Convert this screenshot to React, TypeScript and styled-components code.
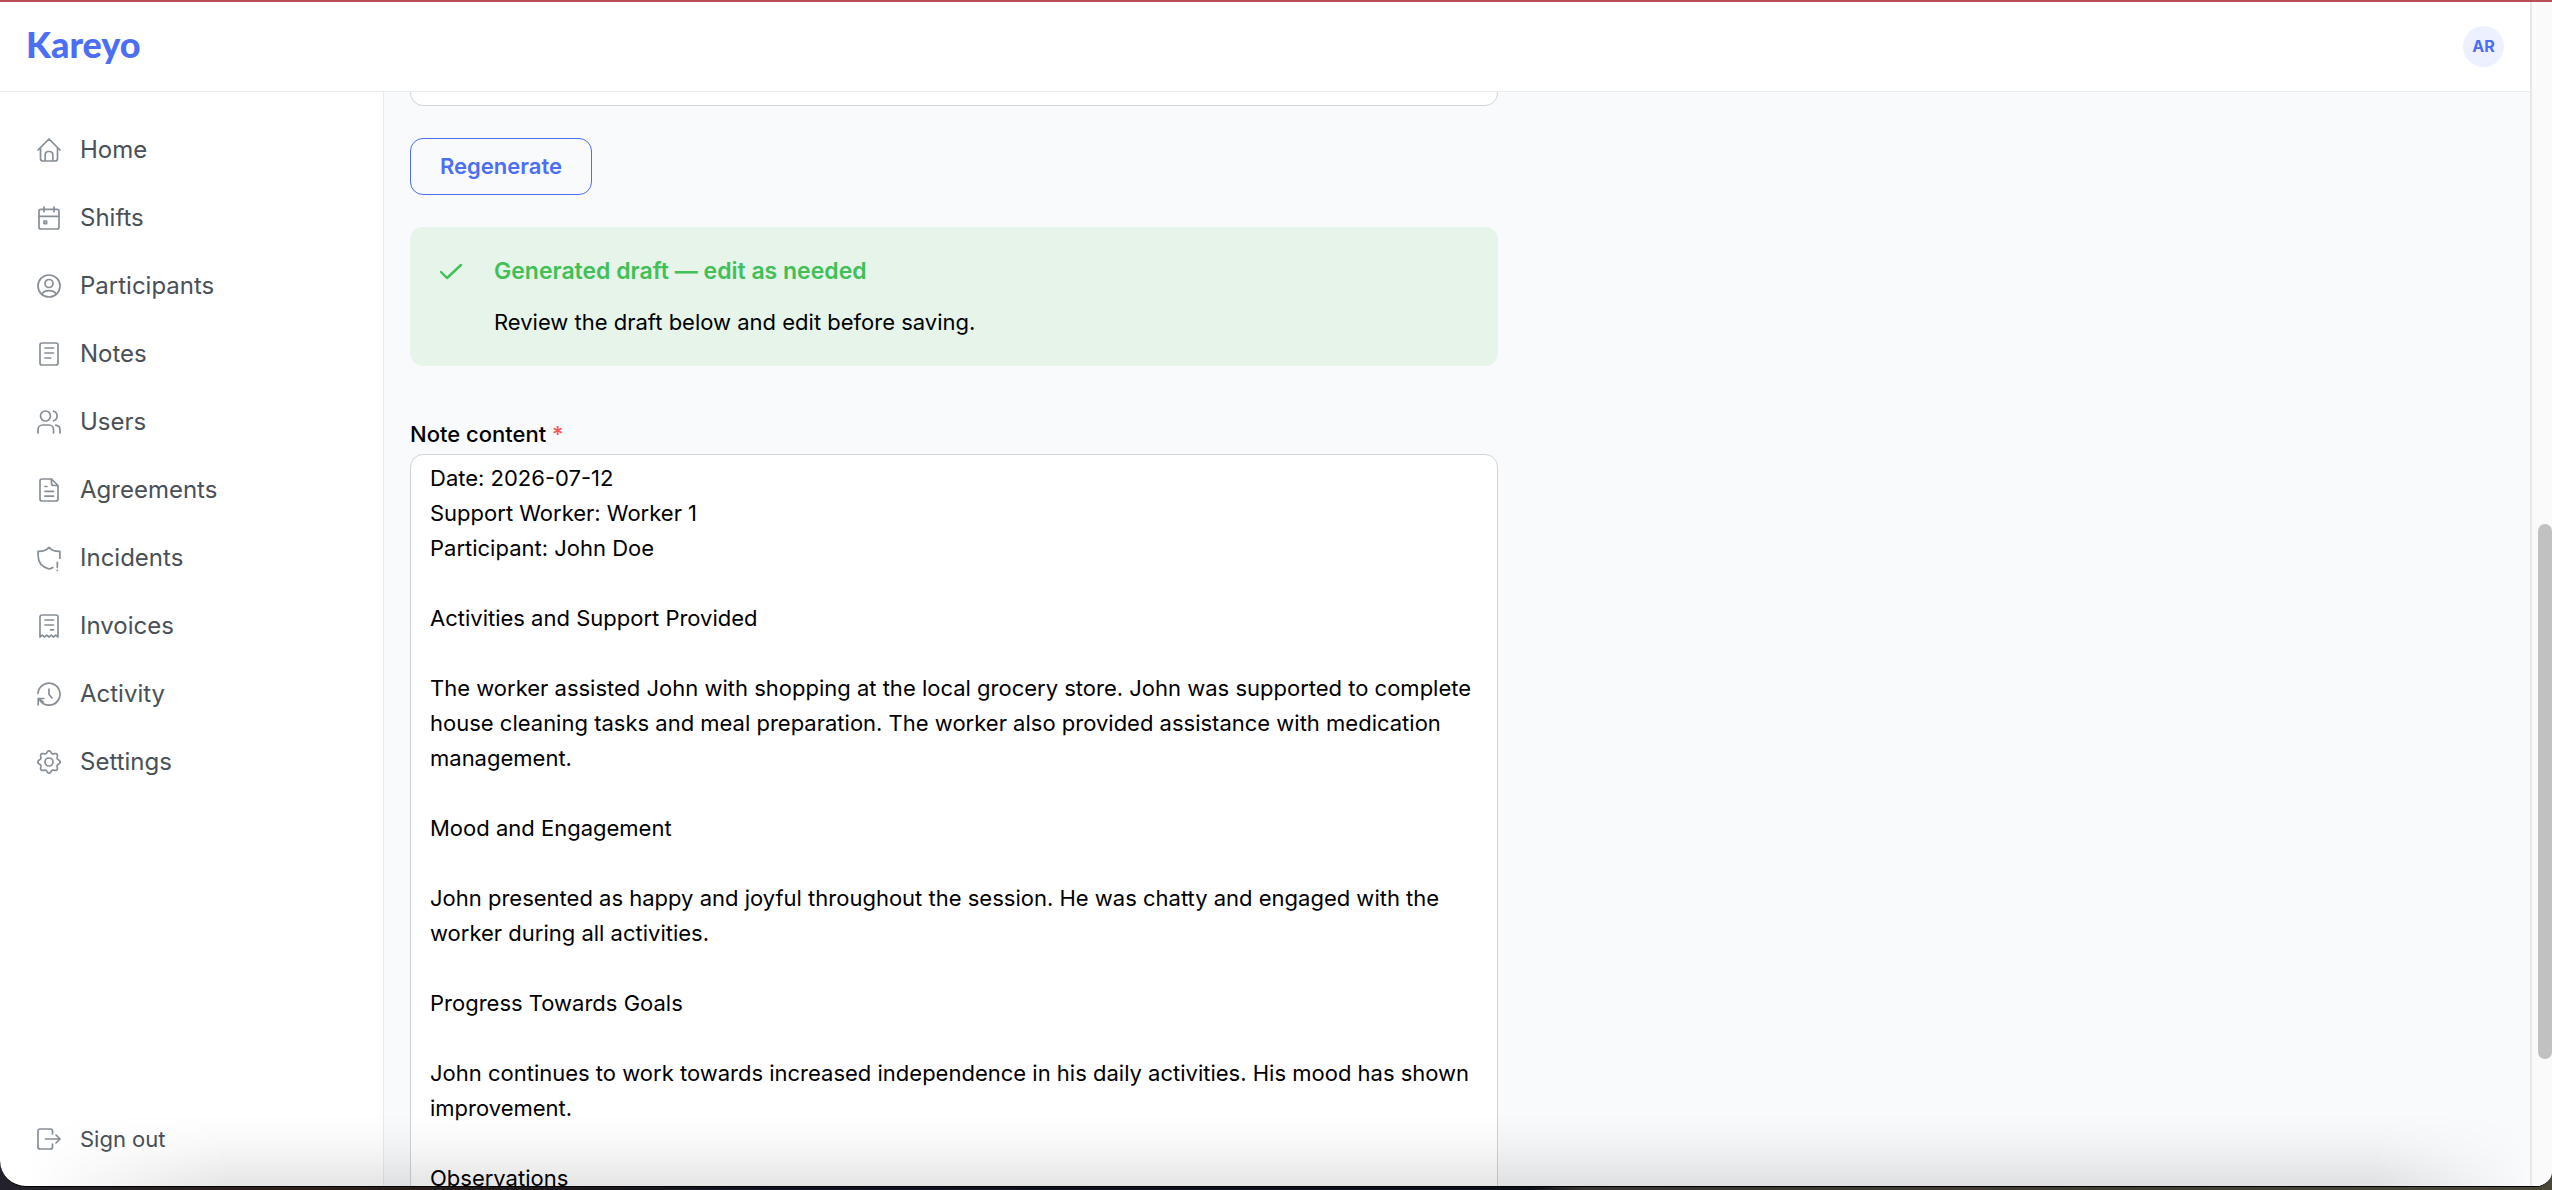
import React from 'react';
import styled, { createGlobalStyle } from 'styled-components';

const Global = createGlobalStyle`
  *, *::before, *::after { box-sizing: border-box; }
  html, body { margin: 0; height: 100%; overflow: hidden; }
  body {
    background: #2b231d;
    color: #000;
    font-family: Inter, "Liberation Sans", sans-serif;
    font-size: 22px;
  }
  #root { height: 100%; }
`;

const Desktop = styled.div`
  height: 100vh;
  padding-bottom: 3px;
  background: linear-gradient(90deg, #23222c 0%, #2e2119 12%, #10131f 30%, #0b0f18 60%, #3a3431 62%, #4a4638 100%);
`;

const Window = styled.div`
  position: relative;
  display: flex;
  height: 100%;
  overflow: hidden;
  background: #fff;
  border-top: 2px solid #b94f54;
  border-bottom: 1px solid #000;
  border-radius: 0 0 16px 26px;
`;

const Shade = styled.div`
  position: absolute;
  inset: auto 0 0 0;
  height: 72px;
  pointer-events: none;
  background: linear-gradient(180deg, rgba(0, 0, 0, 0), rgba(0, 0, 0, 0.03) 45%, rgba(0, 0, 0, 0.1));
  mask-image: linear-gradient(90deg, transparent 1%, #000 9%, #000 93%, transparent 99%);
`;

const Page = styled.div`
  flex: 1;
  min-width: 0;
  display: flex;
  flex-direction: column;
`;

const Header = styled.header`
  flex: none;
  display: flex;
  align-items: center;
  justify-content: space-between;
  height: 90px;
  padding: 0 26px;
  border-bottom: 1px solid #e9ecef;
`;

const Logo = styled.a`
  padding-bottom: 6px;
  color: #4c6ef5;
  font-family: Lato, Inter, sans-serif;
  font-size: 36px;
  font-weight: 900;
  line-height: 44px;
  text-decoration: none;
`;

const Avatar = styled.button`
  width: 41px;
  height: 41px;
  padding: 0;
  border: 0;
  border-radius: 50%;
  background: #edf0fe;
  color: #4c6ef5;
  font: 700 16px/41px Inter, sans-serif;
`;

const Body = styled.div`
  flex: 1;
  min-height: 0;
  display: flex;
`;

const Sidebar = styled.aside`
  flex: none;
  display: flex;
  flex-direction: column;
  justify-content: space-between;
  width: 384px;
  padding: 24px 0 13px;
  border-right: 1px solid #e9ecef;
`;

const Nav = styled.nav`
  display: flex;
  flex-direction: column;
`;

const NavLink = styled.a`
  display: flex;
  align-items: center;
  gap: 19px;
  height: 68px;
  padding: 0 37px;
  color: #495057;
  font-size: 24px;
  line-height: 36px;
  text-decoration: none;
`;

const SignOut = styled.button`
  display: flex;
  align-items: center;
  gap: 19px;
  height: 68px;
  padding: 0 37px;
  border: 0;
  background: none;
  color: #495057;
  font: 400 22px/36px Inter, sans-serif;
`;

const Icon = styled.svg`
  flex: none;
  width: 24px;
  height: 24px;
  overflow: visible;
  fill: none;
  stroke: #868e96;
  stroke-width: 1.7;
  stroke-linecap: round;
  stroke-linejoin: round;
`;

const Main = styled.main`
  flex: 1;
  min-width: 0;
  overflow: hidden;
  padding: 0 26px;
  background: #f8fafc;
`;

const Form = styled.form`
  display: flex;
  flex-direction: column;
  align-items: flex-start;
  width: 100%;
  max-width: 1088px;
`;

const Prompt = styled.textarea`
  display: block;
  width: 100%;
  height: 120px;
  margin-top: -106px;
  border: 1px solid #ced4da;
  border-radius: 13px;
  background: #fff;
  resize: none;
`;

const Regenerate = styled.button`
  height: 57px;
  margin: 32px 0;
  padding: 0 29px 2px;
  border: 1px solid #4c6ef5;
  border-radius: 13px;
  background: transparent;
  color: #4c6ef5;
  font: 600 22px/34px Inter, sans-serif;
`;

const Alert = styled.section`
  display: flex;
  gap: 30px;
  width: 100%;
  padding: 26px 28px;
  border-radius: 13px;
  background: #e6f4ea;
`;

const Check = styled.svg`
  flex: none;
  width: 26px;
  height: 36px;
  fill: none;
  stroke: #40c057;
  stroke-width: 2.4;
  stroke-linecap: round;
  stroke-linejoin: round;
`;

const AlertText = styled.div`
  display: flex;
  flex-direction: column;
  gap: 16px;
`;

const AlertTitle = styled.h2`
  margin: 0;
  color: #40c057;
  font-size: 23px;
  font-weight: 600;
  line-height: 36px;
`;

const AlertBody = styled.p`
  margin: 0;
  line-height: 35px;
`;

const Label = styled.label`
  margin: 51px 0 2px;
  font-weight: 500;
  line-height: 35px;
`;

const Star = styled.span`
  color: #fa5252;
`;

const Note = styled.textarea`
  display: block;
  width: 100%;
  height: 900px;
  padding: 6px 19px;
  border: 1px solid #ced4da;
  border-radius: 13px;
  background: #fff;
  color: #000;
  font: 400 22px/35px Inter, sans-serif;
  resize: none;
  overflow: hidden;
`;

const Track = styled.div`
  flex: none;
  display: flex;
  justify-content: flex-end;
  align-items: flex-start;
  width: 22px;
  padding-top: 522px;
  border-left: 2px solid #e6e7e8;
  background: #fafafa;
`;

const Thumb = styled.div`
  width: 14px;
  height: 535px;
  border-radius: 8px;
  background: #c1c1c1;
`;

const gearPath = Array.from({ length: 96 }, (_, i) => {
  const a = (i / 96) * Math.PI * 2;
  const r = 10 + 1.2 * Math.cos(8 * a);
  return `${i ? 'L' : 'M'}${(12 + r * Math.cos(a)).toFixed(2)} ${(12 + r * Math.sin(a)).toFixed(2)}`;
}).join('') + 'Z';

const items: { label: string; icon: React.ReactNode }[] = [
  {
    label: 'Home',
    icon: <path d="M1 12 12 1l11 11M3.5 9.8v10.7a2.5 2.5 0 0 0 2.5 2.5h12a2.5 2.5 0 0 0 2.5-2.5V9.8M8.2 23v-6.5a3 3 0 0 1 3-3h1.6a3 3 0 0 1 3 3V23" />,
  },
  {
    label: 'Shifts',
    icon: (
      <>
        <rect x="2" y="3.3" width="20" height="19.7" rx="2" />
        <path d="M2 10.3h20M7 1v4.7M17 1v4.7" />
        <rect x="7" y="15" width="2.6" height="2.6" />
      </>
    ),
  },
  {
    label: 'Participants',
    icon: (
      <>
        <circle cx="12" cy="12" r="11" />
        <circle cx="12" cy="9.5" r="4" />
        <path d="M5 20.3c1.2-2.8 3.8-3.6 7-3.6s5.8.8 7 3.6" />
      </>
    ),
  },
  {
    label: 'Notes',
    icon: (
      <>
        <rect x="3" y="1" width="18" height="22" rx="2" />
        <path d="M8 6h8.5M8 11h8.5M8 16h5.7" />
      </>
    ),
  },
  {
    label: 'Users',
    icon: (
      <>
        <circle cx="8.5" cy="6" r="5" />
        <path d="M1 23v-3.5a4.5 4.5 0 0 1 4.5-4.5h6.5a4.5 4.5 0 0 1 4.5 4.5V23M16.5 1.2a5 5 0 0 1 0 9.6M18.8 15.2a5 5 0 0 1 4.2 5V23" />
      </>
    ),
  },
  {
    label: 'Agreements',
    icon: <path d="M14.5 1H5a2 2 0 0 0-2 2v18a2 2 0 0 0 2 2h14a2 2 0 0 0 2-2V7.5L14.5 1v4.5a2 2 0 0 0 2 2H21M8 8.5h2M8 13.3h8.5M8 18.2h8.5" />,
  },
  {
    label: 'Incidents',
    icon: <path d="M22.9 12.2V5.4C18.5 5.6 15 4.5 12 1.3 9 4.5 5.5 5.6 1.1 5.4V9.5c0 6.5 4 11.5 10.9 13.5 1.5-.3 2.8-.8 3.8-1.5M20.3 16.3v5M20.3 24.3v.1" />,
  },
  {
    label: 'Invoices',
    icon: <path d="M3 23V3a2 2 0 0 1 2-2h14a2 2 0 0 1 2 2v20l-2.2-1.8L16.5 23l-2.2-1.8L12 23l-2.2-1.8L7.5 23l-2.3-1.8L3 23M8 6h8.5M8 11h8.5M13.5 15.8h3" />,
  },
  {
    label: 'Activity',
    icon: <path d="M1 11.5A11 11 0 1 1 3 18.5M1.2 22.8v-6.3h5.6M1.2 16.5l5 3.5M12 7v5.5l3 3.5" />,
  },
  {
    label: 'Settings',
    icon: (
      <>
        <path d={gearPath} />
        <circle cx="12" cy="12" r="4" />
      </>
    ),
  },
];

const noteText = `Date: 2026-07-12
Support Worker: Worker 1
Participant: John Doe

Activities and Support Provided

The worker assisted John with shopping at the local grocery store. John was supported to complete house cleaning tasks and meal preparation. The worker also provided assistance with medication management.

Mood and Engagement

John presented as happy and joyful throughout the session. He was chatty and engaged with the worker during all activities.

Progress Towards Goals

John continues to work towards increased independence in his daily activities. His mood has shown improvement.

Observations`;

export default function App() {
  return (
    <Desktop>
      <Global />
      <Window>
        <Page>
          <Header>
            <Logo href="#">Kareyo</Logo>
            <Avatar type="button">AR</Avatar>
          </Header>
          <Body>
            <Sidebar>
              <Nav>
                {items.map((item) => (
                  <NavLink href="#" key={item.label}>
                    <Icon viewBox="0 0 24 24" aria-hidden="true">{item.icon}</Icon>
                    {item.label}
                  </NavLink>
                ))}
              </Nav>
              <SignOut type="button">
                <Icon viewBox="0 0 24 24" aria-hidden="true">
                  <path d="M15.5 7V4a2 2 0 0 0-2-2H3a2 2 0 0 0-2 2v16a2 2 0 0 0 2 2h10.5a2 2 0 0 0 2-2v-3M8.5 12H23M19 8l4 4-4 4" />
                </Icon>
                Sign out
              </SignOut>
            </Sidebar>
            <Main>
              <Form>
                <Prompt aria-label="Prompt" />
                <Regenerate type="button">Regenerate</Regenerate>
                <Alert>
                  <Check viewBox="0 0 26 36" aria-hidden="true">
                    <path d="m3 19 6 6L23 12" />
                  </Check>
                  <AlertText>
                    <AlertTitle>Generated draft — edit as needed</AlertTitle>
                    <AlertBody>Review the draft below and edit before saving.</AlertBody>
                  </AlertText>
                </Alert>
                <Label htmlFor="note">
                  Note content <Star>*</Star>
                </Label>
                <Note id="note" defaultValue={noteText} spellCheck={false} />
              </Form>
            </Main>
          </Body>
        </Page>
        <Track>
          <Thumb />
        </Track>
        <Shade />
      </Window>
    </Desktop>
  );
}
